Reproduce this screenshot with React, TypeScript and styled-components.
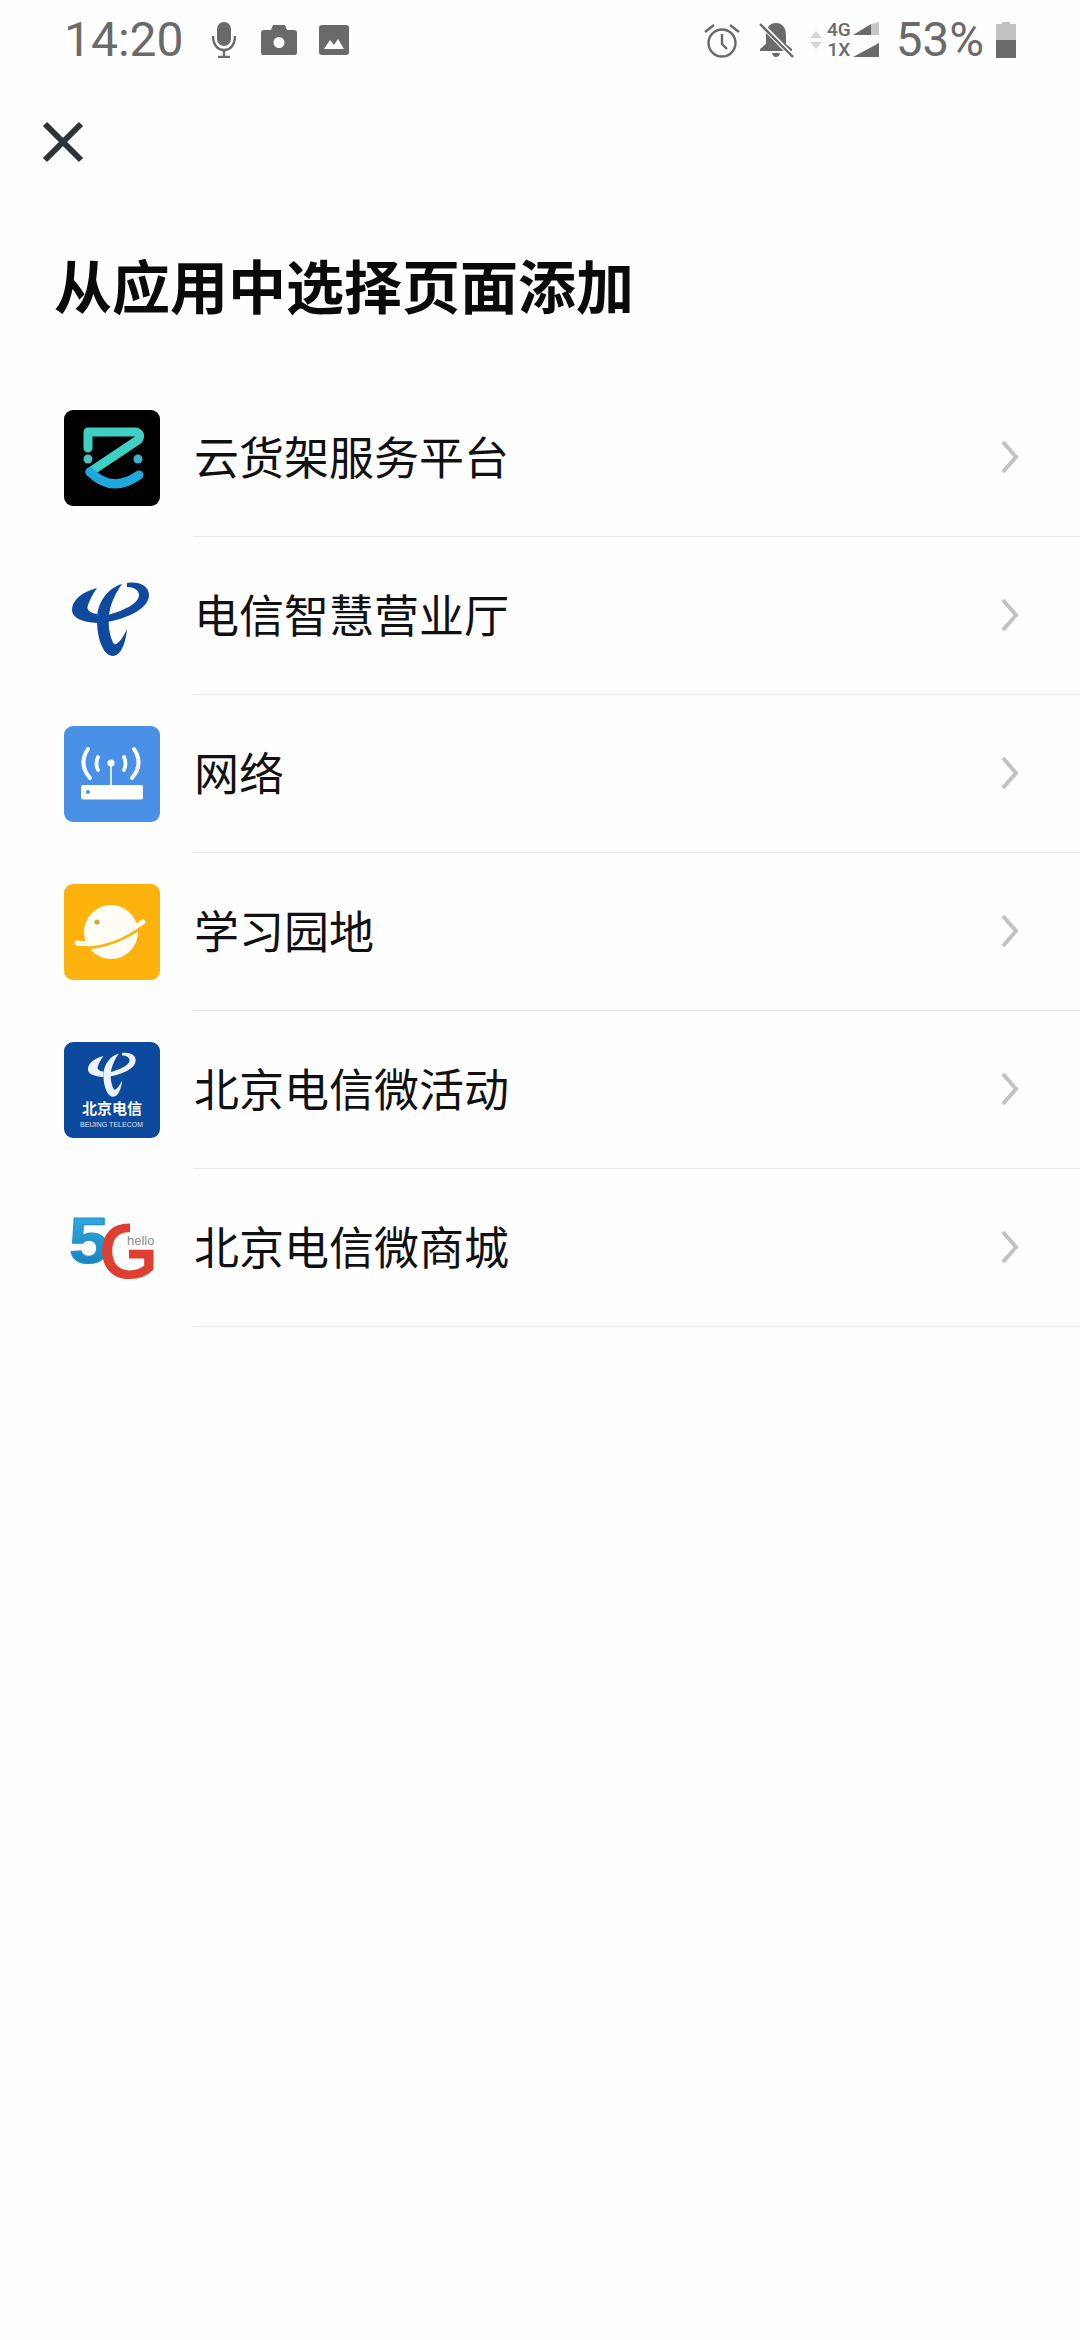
import React from 'react'
import styled, { createGlobalStyle } from 'styled-components'

const GlobalStyle = createGlobalStyle`
  html, body {
    margin: 0;
    padding: 0;
    background: #fefefe;
  }
  * {
    box-sizing: border-box;
  }
`

const Page = styled.div`
  width: 1080px;
  height: 2340px;
  overflow: hidden;
  background: #fefefe;
  font-family: "Noto Sans CJK SC", "Noto Sans", sans-serif;
`

const StatusBar = styled.div`
  display: flex;
  align-items: center;
  justify-content: space-between;
  height: 80px;
  padding: 0 64px 0 64px;
  color: #6a6a6a;
  font-family: Roboto, sans-serif;
`

const StatusGroup = styled.div`
  display: flex;
  align-items: center;
`

const Clock = styled.span`
  font-size: 48px;
  line-height: 80px;
  margin-right: 27px;
`

const Percent = styled.span`
  font-size: 47.5px;
  line-height: 80px;
  margin: 0 12px 0 17px;
`

const NetLabels = styled.div`
  display: flex;
  flex-direction: column;
  width: 28px;
  margin-left: 3px;
  font-size: 19px;
  line-height: 20px;
  font-weight: 500;
  text-align: center;
`

const Glyph = styled.svg<{ $gap?: number }>`
  display: block;
  flex: none;
  margin-left: ${({ $gap }) => $gap ?? 0}px;
`

const CloseButton = styled.div`
  height: 84px;
  padding: 41px 0 0 42px;
`

const Title = styled.h1`
  margin: 80px 0 0 54px;
  height: 80px;
  font-size: 58px;
  line-height: 80px;
  font-weight: 700;
  color: #0a0a0a;
`

const List = styled.div`
  margin-top: 55px;
`

const Row = styled.div`
  display: flex;
  align-items: center;
  height: 158px;
  padding-left: 64px;
`

const AppIcon = styled.div<{ $bg?: string }>`
  flex: none;
  width: 96px;
  height: 96px;
  margin-bottom: 1px;
  border-radius: 9px;
  overflow: hidden;
  background: ${({ $bg }) => $bg ?? 'transparent'};
`

const RowBody = styled.div`
  flex: 1;
  display: flex;
  align-items: center;
  justify-content: space-between;
  height: 158px;
  margin-left: 33px;
  padding: 0 61px 2px 1px;
  border-bottom: 1px solid #e8e8e8;
`

const RowLabel = styled.span`
  margin-bottom: 2px;
  font-size: 45px;
  line-height: 60px;
  color: #111;
`

const TelecomMark = ({ color }: { color: string }) => (
  <g fill={color}>
    <path d="M58 16C44 20 33 34 33 52C33 72 40 88 49 88C57 88 62 74 63 61C59 70 53 78 50 76C44 66 42 46 50 30C52 25 55 20 58 16Z" />
    <path d="M33 20C18 24 8 32 8 42C8 50 18 54 33 55L33 46C26 45 22 42 24 37C26 31 29 26 33 20Z" />
    <path d="M63 15C75 13 85 18 85 27C85 40 65 50 43 54L44 47C58 43 75 36 75 27C75 22 70 19 63 19Z" />
  </g>
)

const ShelfIcon = () => (
  <AppIcon $bg="#000">
    <svg width="96" height="96" viewBox="0 0 96 96" fill="none">
      <path d="M24 38V22H72Q78 24 74 30L26 62" stroke="#3fd0c4" strokeWidth="9" strokeLinecap="round" strokeLinejoin="round" />
      <path d="M26 62Q48 84 75 65" stroke="#1fa8dc" strokeWidth="9" strokeLinecap="round" />
      <circle cx="24" cy="49" r="4.5" fill="#4cc4c8" />
      <circle cx="74" cy="49" r="4.5" fill="#3cb4cc" />
    </svg>
  </AppIcon>
)

const TelecomIcon = () => (
  <AppIcon>
    <svg width="96" height="96" viewBox="0 0 96 96">
      <TelecomMark color="#0f4a9f" />
    </svg>
  </AppIcon>
)

const NetworkIcon = () => (
  <AppIcon $bg="#4a90e6">
    <svg width="96" height="96" viewBox="0 0 96 96" fill="none">
      <circle cx="47" cy="37" r="3.6" fill="#fff" />
      <path d="M47 39V60" stroke="#fff" strokeWidth="1.6" />
      <path d="M34 31Q31 38 34 44M60 31Q63 38 60 44" stroke="#fff" strokeWidth="3.8" strokeLinecap="round" />
      <path d="M24 23Q14 38 26 52M70 23Q80 38 68 52" stroke="#fff" strokeWidth="4" strokeLinecap="round" />
      <rect x="17" y="59" width="62" height="14.5" rx="2" fill="#fff" />
      <circle cx="24" cy="66" r="2" fill="#4a90e6" />
    </svg>
  </AppIcon>
)

const PlanetIcon = () => (
  <AppIcon $bg="#fdb20d">
    <svg width="96" height="96" viewBox="0 0 96 96" fill="none">
      <circle cx="47" cy="48" r="27" fill="#fffdf6" />
      <path d="M13 59C30 62 60 52 79 38" stroke="#fffdf6" strokeWidth="5" strokeLinecap="round" />
      <path d="M20 64C40 64 62 55 78 43" stroke="#fdb20d" strokeWidth="2.6" />
      <circle cx="33" cy="38" r="2.6" fill="#d8a53a" />
    </svg>
  </AppIcon>
)

const BeijingIcon = () => (
  <AppIcon $bg="#0b4a9c">
    <svg width="96" height="96" viewBox="0 0 96 96">
      <g transform="translate(19 2) scale(0.62 0.6)">
        <TelecomMark color="#eef3f8" />
      </g>
      <text x="48" y="72" textAnchor="middle" fontFamily="Noto Sans CJK SC, sans-serif" fontWeight="700" fontSize="15" fill="#fff">北京电信</text>
      <text x="16" y="84.5" textLength="63" lengthAdjust="spacingAndGlyphs" fontFamily="Liberation Sans, sans-serif" fontSize="7.4" fill="#dfe8f4">BEIJING TELECOM</text>
    </svg>
  </AppIcon>
)

const HelloIcon = () => (
  <AppIcon>
    <svg width="96" height="96" viewBox="0 0 96 96">
      <defs>
        <linearGradient id="five" x1="0" y1="0" x2="0" y2="1">
          <stop offset="0" stopColor="#35b5e6" />
          <stop offset="1" stopColor="#1478b8" />
        </linearGradient>
      </defs>
      <text x="5" y="63" textLength="40" lengthAdjust="spacingAndGlyphs" fontFamily="Liberation Sans, sans-serif" fontWeight="700" fontSize="65" fill="url(#five)" stroke="#1f93cf" strokeWidth="1.2">5</text>
      <text x="36" y="77" fontFamily="Liberation Sans, sans-serif" fontWeight="400" fontSize="74" fill="#dd3f30" stroke="#dd3f30" strokeWidth="3">G</text>
      <rect x="66" y="20" width="30" height="27" fill="#fefefe" />
      <text x="63" y="45" fontFamily="Liberation Sans, sans-serif" fontSize="13" fill="#8a8f94">hello</text>
    </svg>
  </AppIcon>
)

const Chevron = () => (
  <Glyph width="18" height="34" viewBox="0 0 18 34" fill="none">
    <path d="M2 2L15 17L2 32" stroke="#c2c2c2" strokeWidth="4" />
  </Glyph>
)

const apps = [
  { name: '云货架服务平台', icon: <ShelfIcon /> },
  { name: '电信智慧营业厅', icon: <TelecomIcon /> },
  { name: '网络', icon: <NetworkIcon /> },
  { name: '学习园地', icon: <PlanetIcon /> },
  { name: '北京电信微活动', icon: <BeijingIcon /> },
  { name: '北京电信微商城', icon: <HelloIcon /> },
]

const App: React.FC = () => (
  <Page>
    <GlobalStyle />
    <StatusBar>
      <StatusGroup>
        <Clock>14:20</Clock>
        <Glyph width="26" height="36" viewBox="0 0 26 36" fill="#6a6a6a">
          <rect x="6" y="0" width="14" height="24" rx="7" />
          <path d="M2 14C2 22 6 28 13 28C20 28 24 22 24 14" fill="none" stroke="#6a6a6a" strokeWidth="2.4" />
          <path d="M13 28V34M7 35H19" stroke="#6a6a6a" strokeWidth="2.4" />
        </Glyph>
        <Glyph $gap={24} width="36" height="32" viewBox="0 0 36 32">
          <path fill="#6a6a6a" fillRule="evenodd" d="M3 6H10L12 1H24L26 6H33Q36 6 36 9V29Q36 31 33 31H3Q0 31 0 29V9Q0 6 3 6ZM18 13A5.5 5.5 0 1 0 18 24A5.5 5.5 0 1 0 18 13Z" />
        </Glyph>
        <Glyph $gap={22} width="30" height="30" viewBox="0 0 30 30">
          <rect width="30" height="30" rx="3" fill="#6a6a6a" />
          <path d="M5 24L11 15L15 20L19 14L25 24Z" fill="#fff" />
        </Glyph>
      </StatusGroup>
      <StatusGroup>
        <Glyph width="36" height="36" viewBox="0 0 36 36" fill="none" stroke="#6a6a6a" strokeWidth="2.4">
          <circle cx="18" cy="21" r="13.5" />
          <path d="M18 12V22L23 27M1 10L10 3M35 10L26 3" />
        </Glyph>
        <Glyph $gap={17} width="38" height="36" viewBox="0 0 38 36">
          <path fill="#6a6a6a" d="M19 1C26 1 29 7 29 13V22L35 27V29H3V27L9 22V13C9 7 12 1 19 1ZM15 31H23Q22 35 19 35Q16 35 15 31Z" />
          <path d="M3 1L36 35" stroke="#fefefe" strokeWidth="5" />
          <path d="M3 2L36 35" stroke="#6a6a6a" strokeWidth="2.4" />
        </Glyph>
        <Glyph $gap={15} width="12" height="18" viewBox="0 0 12 18" fill="#d4d4d4">
          <path d="M6 0L12 7H0ZM6 18L0 11H12Z" />
        </Glyph>
        <NetLabels>
          <span>4G</span>
          <span>1X</span>
        </NetLabels>
        <Glyph width="26" height="36" viewBox="0 0 26 36">
          <path d="M0 13L18 2V13Z" fill="#6a6a6a" />
          <path d="M18 2L26 0V13H18Z" fill="#c6c6c6" />
          <path d="M0 35L26 21V35Z" fill="#6a6a6a" />
        </Glyph>
        <Percent>53%</Percent>
        <Glyph width="20" height="36" viewBox="0 0 20 36">
          <path d="M6 0H14V2H20V18H0V2H6Z" fill="#c2c2c2" />
          <rect y="18" width="20" height="18" fill="#6a6a6a" />
        </Glyph>
      </StatusGroup>
    </StatusBar>
    <CloseButton>
      <Glyph width="42" height="42" viewBox="0 0 42 42" fill="none">
        <path d="M3 3L39 39M39 3L3 39" stroke="#2e3336" strokeWidth="6" />
      </Glyph>
    </CloseButton>
    <Title>从应用中选择页面添加</Title>
    <List>
      {apps.map((app) => (
        <Row key={app.name}>
          {app.icon}
          <RowBody>
            <RowLabel>{app.name}</RowLabel>
            <Chevron />
          </RowBody>
        </Row>
      ))}
    </List>
  </Page>
)

export default App
